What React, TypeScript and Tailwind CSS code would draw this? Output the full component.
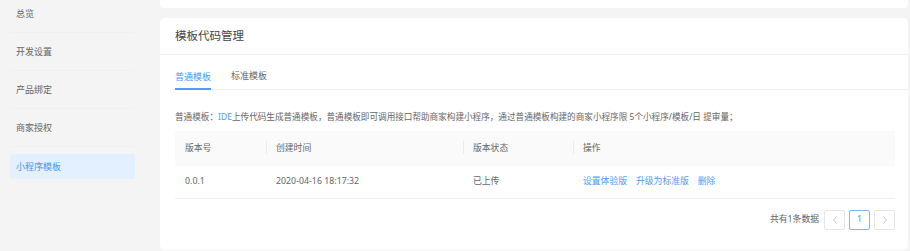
const menu = ["总览", "开发设置", "产品绑定", "商家授权", "小程序模板"];

const columns = [
  { title: "版本号", w: "w-[91px]" },
  { title: "创建时间", w: "w-[197px]" },
  { title: "版本状态", w: "w-[110px]" },
  { title: "操作", w: "flex-1" },
];

export default function App() {
  return (
    <div
      className="flex h-[251px] w-[910px] overflow-hidden bg-[#f4f4f4] text-[#666]"
      style={{ fontFamily: '"Noto Sans", "Noto Sans CJK SC", sans-serif' }}
    >
      <aside className="w-[150px] shrink-0 pl-[10px] pr-[15px]">
        <ul className="-mt-[5px]">
          {menu.map((m, i) => {
            const active = i === menu.length - 1;
            return (
              <li
                key={m}
                className={`flex h-[38px] items-center ${active ? "" : "border-b border-[#f0f0f0]"}`}
              >
                <div
                  className={`flex h-[25px] w-full items-center rounded-[3px] pl-[6px] text-[9px] ${
                    active ? "mt-[1px] bg-[#e3f0ff] text-[#4a96f5]" : "text-[#666]"
                  }`}
                >
                  {m}
                </div>
              </li>
            );
          })}
        </ul>
      </aside>

      <main className="flex-1 pl-[10px] pr-[2px]">
        <div className="h-[8px] rounded-b-[4px] bg-white" />

        <section className="mt-[10px] h-[232px] rounded-[5px] bg-white">
          <div className="flex h-[37px] items-center border-b border-[#f2f2f2] px-[15px] text-[11.5px] text-[#444]">
            模板代码管理
          </div>

          <div className="ml-[15px] flex h-[35px] items-end gap-[20px] border-b border-[#f0f0f0] text-[9px]">
            <div className="flex h-full flex-col justify-end">
              <span className="mb-[5px] text-[#4a9bf7]">普通模板</span>
              <div className="-mb-[1px] h-[2px] bg-[#4a9df8]" />
            </div>
            <div className="flex h-full flex-col justify-end">
              <span className="mb-[7px] text-[#666]">标准模板</span>
            </div>
          </div>

          <div className="pl-[15px] pr-[13px]">
            <p className="mt-[20px] text-[8.6px] leading-[14px] text-[#666]">
              普通模板：<span className="text-[#4a9bf7]">IDE</span>
              上传代码生成普通模板，普通模板即可调用接口帮助商家构建小程序，通过普通模板构建的商家小程序限 5个小程序/模板/日 提审量；
            </p>

            <div className="mt-[7px] text-[8.8px]">
              <div className="flex h-[35px] items-center bg-[#fafafa] text-[#666]">
                {columns.map((c, i) => (
                  <div key={c.title} className={`${c.w} relative flex h-full items-center pl-[10px]`}>
                    {i > 0 && (
                      <span className="absolute left-0 top-[10px] h-[13px] w-px bg-[#ebebeb]" />
                    )}
                    {c.title}
                  </div>
                ))}
              </div>
              <div className="flex h-[33px] items-center border-b border-[#f0f0f0] text-[#666]">
                <div className="w-[91px] pl-[10px]">0.0.1</div>
                <div className="w-[197px] pl-[10px]">2020-04-16 18:17:32</div>
                <div className="w-[110px] pl-[10px]">已上传</div>
                <div className="flex flex-1 gap-[9px] pl-[10px] text-[#4a9bf7]">
                  <span>设置体验版</span>
                  <span>升级为标准版</span>
                  <span>删除</span>
                </div>
              </div>
            </div>

            <div className="mt-[11px] flex items-center justify-end text-[8.8px] text-[#666]">
              <span className="mr-[5px]">共有1条数据</span>
              <button className="flex h-[20px] w-[21px] items-center justify-center rounded-[2px] border border-[#e6e6e6] text-[#c8c8c8]">
                <svg width="6" height="8" viewBox="0 0 6 8" fill="none" stroke="currentColor" strokeWidth="1">
                  <path d="M4.5 0.5 1.5 4l3 3.5" />
                </svg>
              </button>
              <button className="ml-[4px] flex h-[20px] w-[21px] items-center justify-center rounded-[2px] border border-[#7ab8fb] text-[#4a9bf7]">
                1
              </button>
              <button className="ml-[4px] flex h-[20px] w-[21px] items-center justify-center rounded-[2px] border border-[#e6e6e6] text-[#c8c8c8]">
                <svg width="6" height="8" viewBox="0 0 6 8" fill="none" stroke="currentColor" strokeWidth="1">
                  <path d="M1.5 0.5 4.5 4l-3 3.5" />
                </svg>
              </button>
            </div>
          </div>
        </section>
      </main>
    </div>
  );
}
